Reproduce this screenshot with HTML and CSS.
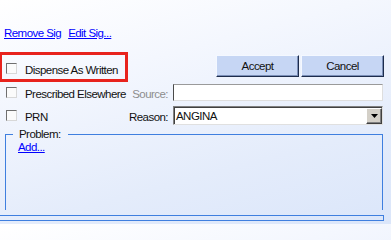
FILE: index.html
```html
<!DOCTYPE html>
<html>
<head>
<meta charset="utf-8">
<link rel="stylesheet" href="styles.css">
</head>
<body>
<div class="pane">
  <div class="links"><a href="#">Remove Sig</a><a href="#">Edit Sig...</a></div>
  <div class="row-top">
    <div class="highlight">
      <label class="check"><span class="box"></span><span>Dispense As Written</span></label>
    </div>
    <div class="buttons">
      <button class="btn">Accept</button>
      <button class="btn">Cancel</button>
    </div>
  </div>
  <div class="field-row r2">
    <label class="check"><span class="box"></span><span>Prescribed Elsewhere</span></label>
    <span class="field-label disabled">Source:</span>
    <div class="textbox"></div>
  </div>
  <div class="field-row r3">
    <label class="check"><span class="box"></span><span>PRN</span></label>
    <span class="field-label">Reason:</span>
    <div class="select">
      <span class="select-text">ANGINA</span>
      <span class="drop"><svg width="7" height="4" viewBox="0 0 7 4"><path d="M0 0H7L3.5 4Z" fill="#000"/></svg></span>
    </div>
  </div>
  <fieldset class="problem">
    <legend>Problem:</legend>
    <a href="#" class="add">Add...</a>
  </fieldset>
  <div class="lower"></div>
</div>
</body>
</html>
```
FILE: styles.css
```css
html, body {
  margin: 0;
}
body {
  width: 391px;
  height: 224px;
  overflow: hidden;
  background: linear-gradient(165deg, #ffffff 0%, #f4f7fe 30%, #e4ecfb 70%, #dbe6fa 100%);
  font-family: "Liberation Sans", Arial, sans-serif;
  font-size: 11.5px;
  letter-spacing: -0.55px;
  color: #111;
}
.pane {
  padding-top: 27px;
}
a {
  color: #0000ff;
  text-decoration: underline;
}
.links {
  display: flex;
  gap: 7px;
  padding-left: 4px;
  height: 13px;
  line-height: 13px;
}
.row-top {
  display: flex;
  justify-content: space-between;
  margin-top: 12px;
  height: 30px;
}
.highlight {
  margin-left: -1px;
  width: 129px;
  height: 30px;
  box-sizing: border-box;
  border: 3px solid #e8231d;
  padding: 9px 0 0 4px;
}
.buttons {
  display: flex;
  gap: 2px;
  margin-top: 3px;
  margin-right: 7px;
}
.btn {
  width: 83px;
  height: 22px;
  box-sizing: border-box;
  padding: 0;
  background: #c6d6f4;
  border: 1px solid;
  border-color: #f4f8ff #1d2c4c #1d2c4c #f4f8ff;
  box-shadow: inset -1px -1px 0 #7b8fb8;
  font: inherit;
  letter-spacing: inherit;
  color: #111;
}
.check {
  display: flex;
  align-items: flex-start;
  gap: 8px;
  line-height: 13px;
  white-space: nowrap;
}
.box {
  flex: none;
  width: 11px;
  height: 11px;
  box-sizing: border-box;
  margin-top: -1px;
  border: 1px solid;
  border-color: #6f6f6f #d8d8d8 #d8d8d8 #6f6f6f;
  background: #fbfbfb;
}
.field-row {
  display: grid;
  grid-template-columns: 1fr auto 210px;
  column-gap: 5px;
  margin-left: 6px;
  margin-right: 8px;
}
.r2 {
  margin-top: 2px;
  height: 17px;
}
.r2 > .check, .r2 > .field-label {
  margin-top: 4px;
}
.r3 {
  margin-top: 5px;
  height: 19px;
}
.r3 > .check, .r3 > .field-label {
  margin-top: 5px;
}
.field-label {
  line-height: 13px;
  text-align: right;
}
.disabled {
  color: #8d8d8d;
}
.textbox {
  height: 17px;
  box-sizing: border-box;
  background: #fff;
  border: 1px solid;
  border-color: #9a9a9a #dedede #dedede #4a4a4a;
}
.select {
  display: flex;
  height: 19px;
  box-sizing: border-box;
  background: #fff;
  border: 1px solid;
  border-color: #808080 #e0e0e0 #e0e0e0 #808080;
  box-shadow: inset 1px 1px 0 #404040;
  padding: 1px 0 0 1px;
}
.select-text {
  line-height: 17px;
  padding-left: 1px;
}
.drop {
  margin-left: auto;
  width: 16px;
  box-sizing: border-box;
  background: #d4d0c8;
  border: 1px solid;
  border-color: #ffffff #404040 #404040 #ffffff;
  box-shadow: inset -1px -1px 0 #808080;
  display: flex;
  align-items: center;
  justify-content: center;
}
.problem {
  margin: 2px 0 0 5px;
  width: 378px;
  height: 83px;
  box-sizing: border-box;
  border: 1px solid #3f7fdf;
  border-bottom: none;
  padding: 0 0 0 7px;
  min-width: 0;
}
.problem legend {
  padding: 0 7px 0 6px;
  line-height: 14px;
  color: #111;
}
.add {
  display: inline-block;
  margin-left: 5px;
  line-height: 13px;
}
.lower {
  margin-top: 5px;
  margin-left: -1px;
  width: 385px;
  height: 6px;
  box-sizing: border-box;
  border: 1px solid #3f7fdf;
}
```
